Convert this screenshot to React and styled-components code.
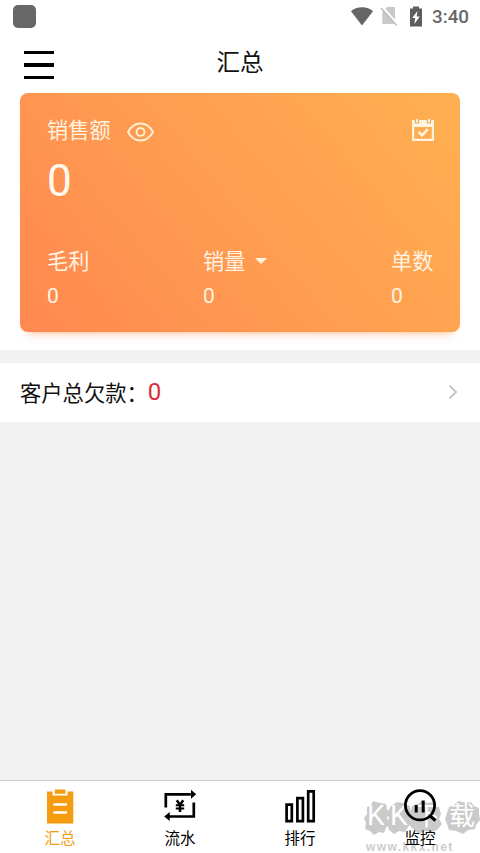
import React from "react";
import styled, { createGlobalStyle } from "styled-components";

const Global = createGlobalStyle`
  * { box-sizing: border-box; }
  body { margin: 0; background: #fff; font-family: Roboto, "Noto Sans CJK SC", sans-serif; color: #111; }
  svg { display: block; flex: none; }
`;

const Screen = styled.div`
  width: 480px;
  height: 853px;
  display: flex;
  flex-direction: column;
  background: #f1f1f1;
  overflow: hidden;
`;
const StatusBar = styled.div`
  height: 32px;
  flex: none;
  background: #fff;
  display: flex;
  align-items: center;
  justify-content: space-between;
  padding: 0 11px 0 13px;
`;
const AppBadge = styled.div`
  width: 23px;
  height: 23px;
  border-radius: 5px;
  background: #676767;
`;
const StatusIcons = styled.div`
  display: flex;
  align-items: center;
  color: #666;
`;
const StatusGap = styled.span`
  width: ${(p) => p.$w}px;
`;
const Clock = styled.span`
  font-size: 18.8px;
  font-weight: 500;
  line-height: 24px;
  margin-left: 9px;
  padding-top: 2px;
  width: 37px;
`;
const Header = styled.header`
  height: 61px;
  flex: none;
  background: #fff;
  display: grid;
  grid-template-columns: 100px 1fr 100px;
  padding-top: 12px;
`;
const MenuButton = styled.div`
  width: 30px;
  height: 28px;
  margin: 7px 0 0 24px;
  display: flex;
  flex-direction: column;
  justify-content: space-between;
`;
const Bar = styled.div`
  height: 3.4px;
  background: #000;
`;
const Title = styled.h1`
  margin: 1px 0 0;
  font-size: 23.5px;
  line-height: 36px;
  font-weight: 400;
  text-align: center;
`;
const Summary = styled.section`
  height: 257px;
  flex: none;
  background: #fff;
  padding: 0 20px;
`;
const Card = styled.div`
  height: 239px;
  border-radius: 8px;
  padding: 23px 26px 0 27px;
  color: #fff3e2;
  background: linear-gradient(50deg, #ff8850 0%, #ff9c50 48%, #ffb051 100%);
  box-shadow: 0 8px 9px -8px rgba(255, 145, 80, 0.75);
`;
const CardTop = styled.div`
  display: flex;
  align-items: center;
  height: 30px;
`;
const Label = styled.div`
  font-size: 21.2px;
  line-height: 30px;
  display: flex;
  align-items: center;
  white-space: nowrap;
`;
const EyeSlot = styled.div`
  margin: 1px auto 0 16px;
`;
const CalendarSlot = styled.div`
  margin-top: -2px;
`;
const Total = styled.div`
  font-size: 44px;
  line-height: 52px;
  margin-top: 9px;
  color: #fffaf0;
`;
const Metrics = styled.div`
  display: grid;
  grid-template-columns: 156px 188px 43px;
  margin-top: 40px;
`;
const MetricValue = styled.div`
  font-size: 21px;
  line-height: 28px;
  margin-top: 5px;
`;
const Caret = styled.i`
  border: 6px solid transparent;
  border-top-color: #fff3e2;
  border-bottom: 0;
  margin: 0 0 2px 10px;
`;
const DebtRow = styled.div`
  height: 59px;
  flex: none;
  margin-top: 13px;
  background: #fff;
  display: flex;
  align-items: center;
  padding: 0 22px 2px 20px;
  font-size: 21.3px;
`;
const DebtValue = styled.span`
  color: #d92d35;
  font-size: 24px;
  margin-right: auto;
  line-height: 30px;
`;
const TabBar = styled.nav`
  position: relative;
  height: 73px;
  flex: none;
  margin-top: auto;
  background: #fff;
  border-top: 1px solid #c9c9c9;
  display: grid;
  grid-template-columns: repeat(4, 1fr);
`;
const Tab = styled.div`
  position: relative;
  z-index: 1;
  display: flex;
  flex-direction: column;
  align-items: center;
  padding-top: 7px;
  color: ${(p) => (p.$active ? "#f59c10" : "#000")};
`;
const TabText = styled.span`
  font-size: 15.5px;
  line-height: 20px;
  margin-top: 5px;
`;
const Watermark = styled.div`
  position: absolute;
  right: 0;
  bottom: 0;
  width: 120px;
  height: 53px;
`;
const WatermarkMark = styled.div`
  position: absolute;
  left: 4px;
  top: 1px;
  width: 116px;
  height: 34px;
`;
const WatermarkText = styled.div`
  position: absolute;
  left: ${(p) => p.$x}px;
  top: -1px;
  color: #fff;
  font-size: ${(p) => p.$size}px;
  line-height: 32px;
  font-weight: 400;
`;
const WatermarkUrl = styled.div`
  position: absolute;
  left: 6px;
  bottom: -1px;
  font: 700 12px/14px "Liberation Sans", sans-serif;
  letter-spacing: 1.4px;
  color: #cdcdcd;
  white-space: nowrap;
`;

const WifiIcon = () => (
  <svg width="24" height="19" viewBox="0 0 24 19" fill="currentColor">
    <path d="M12 18.500 1 4.200C3.700 1.700 7.500.2 12 .2s8.300 1.500 11 4Z" />
  </svg>
);
const NoSimIcon = () => (
  <svg width="18" height="20" viewBox="0 0 18 20">
    <path d="M2.300 6 7 1h8v17H2.300Z" fill="#c9c9c9" />
    <path d="M2.500 1.500 17 18.500" stroke="#fff" strokeWidth="3" />
    <path d="M1 2 16.500 19.300" stroke="#bcbcbc" strokeWidth="1.600" />
  </svg>
);
const BatteryIcon = () => (
  <svg width="14" height="21" viewBox="0 0 14 21">
    <path d="M4 .5h6v2h3v18H1v-18h3Z" fill="#5d5d5d" />
    <path d="M8.400 5 3.200 12h3L5.300 18 10.800 10.400H7.700Z" fill="#fff" />
  </svg>
);
const EyeIcon = () => (
  <svg width="27" height="20" viewBox="0 0 27 20" fill="none" stroke="#fff0d5" strokeWidth="1.900">
    <path d="M1 10C4 4.500 8.500 1.500 13.500 1.500S23 4.500 26 10c-3 5.500-7.500 8.500-12.500 8.500S4 15.500 1 10Z" />
    <circle cx="13.500" cy="10" r="4" />
  </svg>
);
const CalendarIcon = () => (
  <svg width="22" height="22" viewBox="0 0 22 22">
    <path fillRule="evenodd" d="M0 1h22v21H0ZM2.200 8v11.700h17.600V8Z" fill="#fff4e0" />
    <path d="M3.500 0v4h3.200V0M15.300 0v4h3.200V0" fill="#fff4e0" stroke="#e6ad61" strokeWidth="1.200" />
    <path d="m6.500 12.800 3.500 3.500 5.800-6.200" fill="none" stroke="#fff4e0" strokeWidth="2.600" />
  </svg>
);
const ChevronIcon = () => (
  <svg width="10" height="16" viewBox="0 0 10 16" fill="none" stroke="#c6c6c6" strokeWidth="2">
    <path d="m1.500 1.500 6.500 6.500-6.500 6.500" />
  </svg>
);
const ClipboardIcon = () => (
  <svg width="36" height="36" viewBox="0 0 36 36" fill="#f59c10">
    <path d="M5 3.500h5.500v4h15v-4H31.300V35.500H5Z" />
    <path d="M12.800 1.500h10.700v4.300h-10.700Z" />
    <path d="M11.500 16.500h13.500M11.500 24.500h13.500" stroke="#fff" strokeWidth="2.600" />
  </svg>
);
const FlowIcon = () => (
  <svg width="36" height="36" viewBox="0 0 36 36" fill="none" stroke="#000" strokeWidth="2.700">
    <path d="M3.800 19.500V6.300h25M31.800 14.500v14h-25" />
    <path d="m29 1.800 5.200 4.500-5.200 4.500ZM7.700 24l-5.500 4.500 5.500 4.500Z" fill="#000" stroke="none" />
    <path d="m14.800 12.300 3.200 4.700 3.200-4.700M18 16.800v7.200" strokeWidth="2.500" />
    <path d="M13.800 17.300h8.400M13.800 20.600h8.400" strokeWidth="2" />
  </svg>
);
const RankIcon = () => (
  <svg width="36" height="36" viewBox="0 0 36 36" fill="none" stroke="#000" strokeWidth="2.700">
    <path d="M4.600 16.600h5.200v16.600H4.600ZM15.400 10.100h5.500v23.100h-5.500ZM26.200 3.400h5.500v29.800h-5.500Z" />
  </svg>
);
const MonitorIcon = () => (
  <svg width="36" height="36" viewBox="0 0 36 36" fill="none" stroke="#000">
    <circle cx="18" cy="17.300" r="14.600" strokeWidth="2.800" />
    <path d="m27.500 27.500 6 5" strokeWidth="3" />
    <path d="M14.200 17v7.500M21.200 12.500v12" strokeWidth="3" />
  </svg>
);
const WatermarkBlobs = () => (
  <svg width="116" height="34" viewBox="0 0 116 34" fill="#cacaca">
    <path d="m3 6 4-2 2-4 7 2 6 1 1 5 2 4-2 5 2 6-3 4-2 5-5-1-5 3-4-4-5-2 1-6-2-5 3-4Z" />
    <path d="m27 5 6-4 6 1 7 3 1 6-2 5 3 6-4 4-3 5-6-1-5 3-5-4-2-7 2-5-2-5Z" />
    <path d="m48 5 6-2 3-3 7 2 6-1 5 5 2 7-2 5 3 5-5 6-5 2-7-1-6 3-5-4-4-4 1-6-3-5 3-4Z" />
    <path d="m85 6 5-2 4-4 8 2 5-1 3 4 5 2v6l1 6-4 5-1 4-7 1-5 4-7-3-7-1-2-6-2-5 2-6Z" />
  </svg>
);

const metrics = [
  { name: "毛利", value: "0" },
  { name: "销量", value: "0", menu: true },
  { name: "单数", value: "0" },
];
const tabs = [
  { name: "汇总", Icon: ClipboardIcon, active: true },
  { name: "流水", Icon: FlowIcon },
  { name: "排行", Icon: RankIcon },
  { name: "监控", Icon: MonitorIcon },
];

export default function App() {
  return (
    <Screen>
      <Global />
      <StatusBar>
        <AppBadge />
        <StatusIcons>
          <WifiIcon />
          <StatusGap $w={6} />
          <NoSimIcon />
          <StatusGap $w={11} />
          <BatteryIcon />
          <Clock>3:40</Clock>
        </StatusIcons>
      </StatusBar>
      <Header>
        <MenuButton>
          <Bar />
          <Bar />
          <Bar />
        </MenuButton>
        <Title>汇总</Title>
      </Header>
      <Summary>
        <Card>
          <CardTop>
            <Label>销售额</Label>
            <EyeSlot><EyeIcon /></EyeSlot>
            <CalendarSlot><CalendarIcon /></CalendarSlot>
          </CardTop>
          <Total>0</Total>
          <Metrics>
            {metrics.map((m) => (
              <div key={m.name}>
                <Label>{m.name}{m.menu && <Caret />}</Label>
                <MetricValue>{m.value}</MetricValue>
              </div>
            ))}
          </Metrics>
        </Card>
      </Summary>
      <DebtRow>
        <span>客户总欠款：</span>
        <DebtValue>0</DebtValue>
        <ChevronIcon />
      </DebtRow>
      <TabBar>
        <Watermark>
          <WatermarkMark>
            <WatermarkBlobs />
            <WatermarkText $x={3} $size={28}>K</WatermarkText>
            <WatermarkText $x={26} $size={28}>K</WatermarkText>
            <WatermarkText $x={50} $size={26}>下</WatermarkText>
            <WatermarkText $x={85} $size={26}>载</WatermarkText>
          </WatermarkMark>
          <WatermarkUrl>www.kkx.net</WatermarkUrl>
        </Watermark>
        {tabs.map(({ name, Icon, active }) => (
          <Tab key={name} $active={active}>
            <Icon />
            <TabText>{name}</TabText>
          </Tab>
        ))}
      </TabBar>
    </Screen>
  );
}
